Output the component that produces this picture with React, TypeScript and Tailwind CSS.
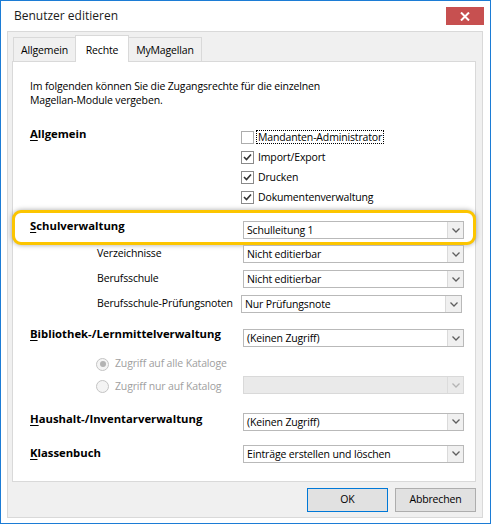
import { clsx } from "clsx";

const FONT = { fontFamily: '"Open Sans", "Noto Sans", sans-serif' };

function Chevron({ disabled }: { disabled?: boolean }) {
  return (
    <svg width="8" height="5" viewBox="0 0 8 5">
      <path
        d="M0.5 0.5 L4 4 L7.5 0.5"
        stroke={disabled ? "#b4b4b4" : "#5f5f5f"}
        strokeWidth="1.3"
        fill="none"
      />
    </svg>
  );
}

function Select({ value, disabled, className }: { value?: string; disabled?: boolean; className?: string }) {
  return (
    <div
      className={clsx(
        "flex h-[18px] w-[221px] shrink-0 border",
        disabled ? "border-[#d9d9d9] bg-[#eaeaea]" : "border-[#b9b9b9] bg-white",
        className
      )}
    >
      <span className="flex-1 truncate pl-[3px] leading-[16px] text-black">{value}</span>
      <span
        className={clsx(
          "flex w-[16px] items-center justify-center border-l",
          disabled ? "border-[#dcdcdc] bg-[#eaeaea]" : "border-[#dadada] bg-[#f0f0f0]"
        )}
      >
        <Chevron disabled={disabled} />
      </span>
    </div>
  );
}

function Check({ checked }: { checked?: boolean }) {
  return (
    <span
      className={clsx(
        "flex h-[13px] w-[13px] shrink-0 items-center justify-center border bg-white",
        checked ? "border-[#8a8a8a]" : "border-[#adadad]"
      )}
    >
      {checked && (
        <svg width="9" height="8" viewBox="0 0 9 8">
          <path d="M1 4 L3.5 6.5 L8 1.5" stroke="#333" strokeWidth="1.6" fill="none" />
        </svg>
      )}
    </span>
  );
}

function Radio({ checked }: { checked?: boolean }) {
  return (
    <span className="flex h-[13px] w-[13px] shrink-0 items-center justify-center rounded-full border border-[#c4c4c4] bg-[#f4f4f4]">
      {checked && <span className="h-[6px] w-[6px] rounded-full bg-[#b3b3b3]" />}
    </span>
  );
}

function Heading({ first, rest }: { first: string; rest: string }) {
  return (
    <span className="whitespace-nowrap text-[11.3px] font-bold leading-[14px] tracking-normal text-black">
      <span className="underline underline-offset-2">{first}</span>
      {rest}
    </span>
  );
}

const CHECKS = [
  { label: "Mandanten-Administrator", checked: false, focus: true },
  { label: "Import/Export", checked: true },
  { label: "Drucken", checked: true },
  { label: "Dokumentenverwaltung", checked: true },
];

const SUB_ROWS = [
  { label: "Verzeichnisse", value: "Nicht editierbar" },
  { label: "Berufsschule", value: "Nicht editierbar" },
];

export default function App() {
  return (
    <div
      style={FONT}
      className="flex h-[524px] w-[491px] flex-col border border-[#1c7cd5] bg-white text-[10.5px] tracking-[-0.15px] text-black"
    >
      {/* title bar */}
      <div className="flex h-[30px] shrink-0 items-start justify-between pl-[13px] pr-[6px]">
        <span className="mt-[6px] text-[12px] leading-[18px] tracking-normal text-[#1a1a1a]">Benutzer editieren</span>
        <button className="mt-[6px] flex h-[18px] w-[38px] items-center justify-center bg-[#c75050]">
          <svg width="10" height="9" viewBox="0 0 10 9">
            <path d="M1 0.5 L9 8.5 M9 0.5 L1 8.5" stroke="white" strokeWidth="2" />
          </svg>
        </button>
      </div>

      {/* client frame */}
      <div className="ml-[6px] mr-[7px] flex flex-col border border-[#d9d9d9] bg-[#f0f0f0] pb-[5px] pl-[4px] pr-[6px] pt-[3px]">
        {/* tabs */}
        <div className="relative z-10 -mb-px flex h-[27px] items-end pl-px">
          <div className="mb-px flex h-[24px] w-[62px] items-center justify-center border-l border-t border-[#d9d9d9] bg-[#f0f0f0] pt-[3px]">
            Allgemein
          </div>
          <div className="flex h-[27px] w-[54px] items-center justify-center border-l border-r border-t border-[#d9d9d9] bg-white pt-[3px]">
            Rechte
          </div>
          <div className="mb-px flex h-[24px] w-[73px] items-center justify-center border-r border-t border-[#d9d9d9] bg-[#f0f0f0] pt-[3px]">
            MyMagellan
          </div>
        </div>

        {/* tab page */}
        <div className="flex h-[421px] flex-col border border-[#d9d9d9] bg-white">
          <p className="mt-[17px] pl-[17px] leading-[14px]">
            Im folgenden können Sie die Zugangsrechte für die einzelnen
            <br />
            Magellan-Module vergeben.
          </p>

          {/* Allgemein */}
          <div className="mt-[20px] flex items-start pl-[17px]">
            <div className="w-[211px] shrink-0">
              <Heading first="A" rest="llgemein" />
            </div>
            <div className="flex flex-col">
              {CHECKS.map((c) => (
                <div key={c.label} className="flex h-[20px] items-center gap-[2px]">
                  <Check checked={c.checked} />
                  <span
                    className={clsx(
                      "px-px leading-[12px]",
                      c.focus ? "border border-dotted border-black" : "border border-transparent"
                    )}
                  >
                    {c.label}
                  </span>
                </div>
              ))}
            </div>
          </div>

          {/* Schulverwaltung (highlighted) */}
          <div className="-mx-px mt-[3px] flex h-[35px] items-start rounded-[9px] border-[3px] border-[#fcc500] bg-white pl-[15px] shadow-[0_0_5px_rgba(0,0,0,0.35)]">
            <div className="mt-[6px] w-[213px] shrink-0">
              <Heading first="S" rest="chulverwaltung" />
            </div>
            <Select value="Schulleitung 1" className="mt-[8px]" />
          </div>

          {SUB_ROWS.map((r, i) => (
            <div key={r.label} className={clsx("flex items-center pl-[84px]", i === 0 ? "mt-0" : "mt-[7px]")}>
              <span className="w-[146px] shrink-0">{r.label}</span>
              <Select value={r.value} />
            </div>
          ))}
          <div className="mt-[7px] flex items-center pl-[84px]">
            <span className="w-[144px] shrink-0 whitespace-nowrap">Berufsschule-Prüfungsnoten</span>
            <Select value="Nur Prüfungsnote" />
          </div>

          {/* Bibliothek */}
          <div className="mt-[16px] flex items-start pl-[17px]">
            <div className="-mt-[2px] w-[213px] shrink-0">
              <Heading first="B" rest="ibliothek-/Lernmittelverwaltung" />
            </div>
            <Select value="(Keinen Zugriff)" />
          </div>

          <div className="mt-[7px] flex h-[20px] items-center gap-[6px] pl-[83px] text-[#a0a0a0]">
            <Radio checked />
            <span>Zugriff auf alle Kataloge</span>
          </div>
          <div className="mt-[2px] flex items-center pl-[83px]">
            <div className="flex w-[147px] shrink-0 items-center gap-[6px] pt-[3px] text-[#a0a0a0]">
              <Radio />
              <span>Zugriff nur auf Katalog</span>
            </div>
            <Select disabled />
          </div>

          {/* Haushalt */}
          <div className="mt-[18px] flex items-start pl-[17px]">
            <div className="-mt-px w-[213px] shrink-0">
              <Heading first="H" rest="aushalt-/Inventarverwaltung" />
            </div>
            <Select value="(Keinen Zugriff)" />
          </div>

          {/* Klassenbuch */}
          <div className="mt-[14px] flex items-center pl-[17px]">
            <div className="w-[213px] shrink-0">
              <Heading first="K" rest="lassenbuch" />
            </div>
            <Select value="Einträge erstellen und löschen" />
          </div>
        </div>

        {/* buttons */}
        <div className="mt-[6px] flex justify-end gap-[7px]">
          <button className="h-[24px] w-[81px] border border-[#0078d7] bg-[#e1e1e1]">OK</button>
          <button className="h-[24px] w-[81px] border border-[#adadad] bg-[#e1e1e1]">Abbrechen</button>
        </div>
      </div>
    </div>
  );
}
